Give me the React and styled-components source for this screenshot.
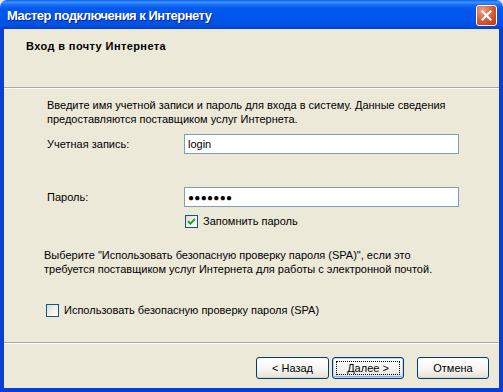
import React from "react";
import styled, { createGlobalStyle } from "styled-components";

const Global = createGlobalStyle`
  html, body { margin: 0; padding: 0; background: #ECE9D8; }
  body { font-family: "Liberation Sans", Arial, sans-serif; }
  * { box-sizing: border-box; }
`;

const Win = styled.div`
  width: 503px;
  height: 392px;
  display: flex;
  flex-direction: column;
  font-family: "Liberation Sans", Arial, sans-serif;
  font-size: 11px;
  color: #000;
`;

const TitleBar = styled.div`
  height: 29px;
  flex: none;
  display: flex;
  align-items: center;
  justify-content: space-between;
  padding: 0 6px 0 7px;
  border-radius: 7px 7px 0 0;
  background: linear-gradient(
    to bottom,
    #0a5cf0 0%,
    #3d95ff 8%,
    #1a6ff8 16%,
    #0058ee 30%,
    #0055eb 70%,
    #0050e3 88%,
    #003fd0 100%
  );
`;

const Title = styled.span`
  color: #fff;
  font-weight: bold;
  font-size: 13px;
  letter-spacing: -0.5px;
  text-shadow: 1px 1px 0 #0a1e8a;
  padding-top: 1px;
`;

const CloseBtn = styled.div`
  width: 21px;
  height: 21px;
  border: 1px solid #fff;
  border-radius: 3px;
  background: radial-gradient(circle at 30% 25%, #f0a58c 0%, #e2653f 40%, #c9431e 80%, #b5371a 100%);
  display: flex;
  align-items: center;
  justify-content: center;
  margin-top: 1px;
`;

const Frame = styled.div`
  flex: 1;
  display: flex;
  flex-direction: column;
  border: 4px solid #0a3fd6;
  border-top: none;
  background: #ECE9D8;
`;

const Header = styled.div`
  height: 59px;
  flex: none;
  padding: 10px 0 0 22px;
  border-bottom: 1px solid #aca899;
  box-shadow: 0 1px 0 #fff;
`;

const HeaderTitle = styled.div`
  font-weight: bold;
  font-size: 11px;
  letter-spacing: 0.4px;
  line-height: 14px;
`;

const Content = styled.div`
  flex: 1;
  display: flex;
  flex-direction: column;
  padding: 10px 40px 0 43px;
`;

const Para = styled.p`
  margin: ${(p) => p.$mt || 0}px 0 0 ${(p) => p.$ml || 0}px;
  line-height: 14px;
  font-size: 11px;
`;

const FieldRow = styled.div`
  display: grid;
  grid-template-columns: 137px 275px;
  align-items: center;
  margin-top: ${(p) => p.$mt}px;
`;

const Label = styled.label`
  line-height: 14px;
`;

const TextBox = styled.input`
  height: 20px;
  width: 275px;
  border: 1px solid #7f9db9;
  background: #fff;
  padding: 0 3px;
  font-family: "Liberation Sans", Arial, sans-serif;
  font-size: ${(p) => (p.$dots ? "10px" : "11px")};
  letter-spacing: ${(p) => (p.$dots ? "0.3px" : "0")};
  color: #000;
  outline: none;
`;

const CheckRow = styled.div`
  display: flex;
  align-items: center;
  gap: 5px;
  margin: ${(p) => p.$mt}px 0 0 ${(p) => p.$ml}px;
  line-height: 14px;
`;

const Box = styled.span`
  width: 13px;
  height: 13px;
  flex: none;
  border: 1px solid #1c5180;
  background: linear-gradient(135deg, #dcdcd7 0%, #f0f0ea 50%, #fff 100%);
  display: flex;
  align-items: center;
  justify-content: center;
`;

const Footer = styled.div`
  height: 46px;
  flex: none;
  border-top: 1px solid #aca899;
  box-shadow: inset 0 1px 0 #fff;
  display: flex;
  justify-content: flex-end;
  align-items: flex-start;
  padding: 14px 10px 0 0;
`;

const Button = styled.button`
  width: ${(p) => p.$w || 73}px;
  height: 22px;
  margin-left: ${(p) => p.$ml || 0}px;
  border: 1px solid #003c74;
  border-radius: 3px;
  background: linear-gradient(to bottom, #ffffff 0%, #f5f4ef 60%, #e6e4da 92%, #d6d0c5 100%);
  font-family: "Liberation Sans", Arial, sans-serif;
  font-size: 11px;
  color: #000;
  padding: 0;
  display: flex;
  align-items: center;
  justify-content: center;
  position: relative;
  box-shadow: ${(p) =>
    p.$focus ? "inset 0 0 0 1px #c2d3fc, inset 0 -1px 0 1px #89adf4" : "none"};
`;

const Focus = styled.span`
  position: absolute;
  inset: 3px;
  border: 1px dotted #000;
`;

export default function App() {
  return (
    <>
      <Global />
      <Win>
        <TitleBar>
          <Title>Мастер подключения к Интернету</Title>
          <CloseBtn>
            <svg width="11" height="11" viewBox="0 0 11 11">
              <path d="M1.5 1.5 L9.5 9.5 M9.5 1.5 L1.5 9.5" stroke="#fff" strokeWidth="2.2" strokeLinecap="square" />
            </svg>
          </CloseBtn>
        </TitleBar>
        <Frame>
          <Header>
            <HeaderTitle>Вход в почту Интернета</HeaderTitle>
          </Header>
          <Content>
            <Para $mt={0}>
              Введите имя учетной записи и пароль для входа в систему. Данные сведения
              <br />
              предоставляются поставщиком услуг Интернета.
            </Para>
            <FieldRow $mt={8}>
              <Label>Учетная запись:</Label>
              <TextBox readOnly defaultValue="login" />
            </FieldRow>
            <FieldRow $mt={33}>
              <Label>Пароль:</Label>
              <TextBox readOnly $dots defaultValue="●●●●●●●" />
            </FieldRow>
            <CheckRow $mt={7} $ml={138}>
              <Box>
                <svg width="9" height="9" viewBox="0 0 9 9">
                  <path d="M1 4.2 L3.4 6.6 L8 2" fill="none" stroke="#21a121" strokeWidth="2" />
                </svg>
              </Box>
              <span>Запомнить пароль</span>
            </CheckRow>
            <Para $mt={20} $ml={-3}>
              Выберите "Использовать безопасную проверку пароля (SPA)", если это
              <br />
              требуется поставщиком услуг Интернета для работы с электронной почтой.
            </Para>
            <CheckRow $mt={27} $ml={-1}>
              <Box />
              <span>Использовать безопасную проверку пароля (SPA)</span>
            </CheckRow>
          </Content>
          <Footer>
            <Button $w={73}>&lt; Назад</Button>
            <Button $w={72} $ml={3} $focus>
              <Focus />
              Далее &gt;
            </Button>
            <Button $w={72} $ml={13}>Отмена</Button>
          </Footer>
        </Frame>
      </Win>
    </>
  );
}
